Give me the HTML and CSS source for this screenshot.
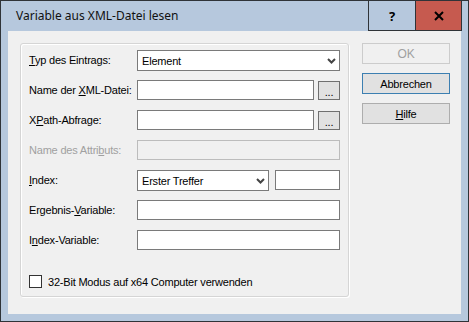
FILE: index.html
```html
<!DOCTYPE html>
<html lang="de">
<head>
  <meta charset="UTF-8">
  <title>Variable aus XML-Datei lesen</title>
  <link rel="stylesheet" href="styles.css">
</head>
<body>
  <div class="fenster">
    <div class="titelleiste">
      <span class="titel">Variable aus XML-Datei lesen</span>
      <div class="titel-knoepfe">
        <span class="tk tk-hilfe">?</span>
        <span class="tk tk-schliessen">
          <svg width="10" height="10" viewBox="0 0 10 10"><path d="M1 1 L9 9 M9 1 L1 9" stroke="#000" stroke-width="2"/></svg>
        </span>
      </div>
    </div>
    <div class="inhalt">
      <div class="gruppe">
        <div class="zeile">
          <label><u>T</u>yp des Eintrags:</label>
          <div class="auswahl">Element<span class="pfeil"><svg width="9" height="6" viewBox="0 0 9 6"><path d="M1 1 L4.5 4.5 L8 1" stroke="#444" stroke-width="2" fill="none"/></svg></span></div>
        </div>
        <div class="zeile">
          <label>Name der <u>X</u>ML-Datei:</label>
          <div class="mit-knopf"><div class="feld"></div><span class="punkte">...</span></div>
        </div>
        <div class="zeile">
          <label>X<u>P</u>ath-Abfrage:</label>
          <div class="mit-knopf"><div class="feld"></div><span class="punkte">...</span></div>
        </div>
        <div class="zeile aus">
          <label>Name des Attri<u>b</u>uts:</label>
          <div class="feld"></div>
        </div>
        <div class="zeile">
          <label><u>I</u>ndex:</label>
          <div class="index-paar">
            <div class="auswahl">Erster Treffer<span class="pfeil"><svg width="9" height="6" viewBox="0 0 9 6"><path d="M1 1 L4.5 4.5 L8 1" stroke="#444" stroke-width="2" fill="none"/></svg></span></div>
            <div class="feld"></div>
          </div>
        </div>
        <div class="zeile">
          <label>Ergebnis-<u>V</u>ariable:</label>
          <div class="feld"></div>
        </div>
        <div class="zeile">
          <label>I<u>n</u>dex-Variable:</label>
          <div class="feld"></div>
        </div>
        <div class="haken-zeile">
          <span class="haken"></span>
          <span>32-Bit Modus auf x64 Computer verwenden</span>
        </div>
      </div>
      <div class="knoepfe">
        <span class="knopf knopf-aus">OK</span>
        <span class="knopf knopf-standard">Abbrechen</span>
        <span class="knopf"><u>H</u>ilfe</span>
      </div>
    </div>
  </div>
</body>
</html>
```

FILE: styles.css
```css
body { margin: 0; font-family: "Liberation Sans", Arial, sans-serif; font-size: 11px; letter-spacing: -0.2px; color: #000; }
.fenster { width: 469px; height: 322px; box-sizing: border-box; border: 1px solid #2f3338; background: #b6c8dd; display: flex; flex-direction: column; }
.titelleiste { height: 30px; display: flex; align-items: flex-start; }
.titel { font-family: "Noto Sans", sans-serif; font-size: 12px; letter-spacing: 0; color: #111; padding: 6px 0 0 15px; flex: 1; }
.titel-knoepfe { display: flex; margin-right: 6px; border: 1px solid #2f3338; margin-top: -1px; }
.tk { height: 29px; display: flex; align-items: center; justify-content: center; }
.tk-hilfe { width: 46px; font-family: "Noto Sans", sans-serif; font-weight: bold; font-size: 13px; border-right: 1px solid #2f3338; }
.tk-schliessen { width: 45px; background: #c65a4f; }
.inhalt { flex: 1; margin: 0 7px 7px 7px; background: #f0f0f0; display: flex; align-items: flex-start; padding: 12px 0 0 12px; }
.gruppe { width: 329px; height: 254px; box-sizing: border-box; border: 1px solid #d5d5d5; box-shadow: inset 1px 1px 0 #fff, 1px 1px 0 #fff; border-radius: 3px; padding: 6px 8px 0 8px; }
.zeile { display: grid; grid-template-columns: 108px 203px; height: 30px; }
.zeile label { padding-top: 4px; }
.zeile.aus label { color: #a0a0a0; }
.feld { height: 20px; box-sizing: border-box; border: 1px solid #7a7a7a; background: #fff; }
.aus .feld { border-color: #bcbcbc; background: #f0f0f0; }
.auswahl { height: 21px; box-sizing: border-box; border: 1px solid #7a7a7a; background: #fff; display: flex; align-items: center; padding-left: 4px; }
.pfeil { margin-left: auto; margin-right: 3px; display: flex; }
.mit-knopf { display: flex; gap: 4px; }
.mit-knopf .feld { flex: 1; }
.punkte { width: 22px; height: 19px; box-sizing: border-box; border: 1px solid #707070; background: #e1e1e1; margin-top: 1px; display: flex; justify-content: center; align-items: flex-end; line-height: 14px; }
.index-paar { display: flex; gap: 6px; }
.index-paar .auswahl { width: 132px; }
.index-paar .feld { flex: 1; }
.haken-zeile { display: flex; align-items: center; gap: 6px; margin-top: 15px; }
.haken { width: 13px; height: 13px; box-sizing: border-box; border: 1px solid #333; background: #fff; }
.knoepfe { display: flex; flex-direction: column; gap: 9px; margin-left: 13px; }
.knopf { width: 88px; height: 21px; box-sizing: border-box; border: 1px solid #adadad; background: #e1e1e1; display: flex; align-items: center; justify-content: center; }
.knopf-aus { border-color: #cccccc; background: #f0f0f0; color: #a0a0a0; font-size: 12px; }
.knopf-standard { border-color: #3c7fb1; }
```
